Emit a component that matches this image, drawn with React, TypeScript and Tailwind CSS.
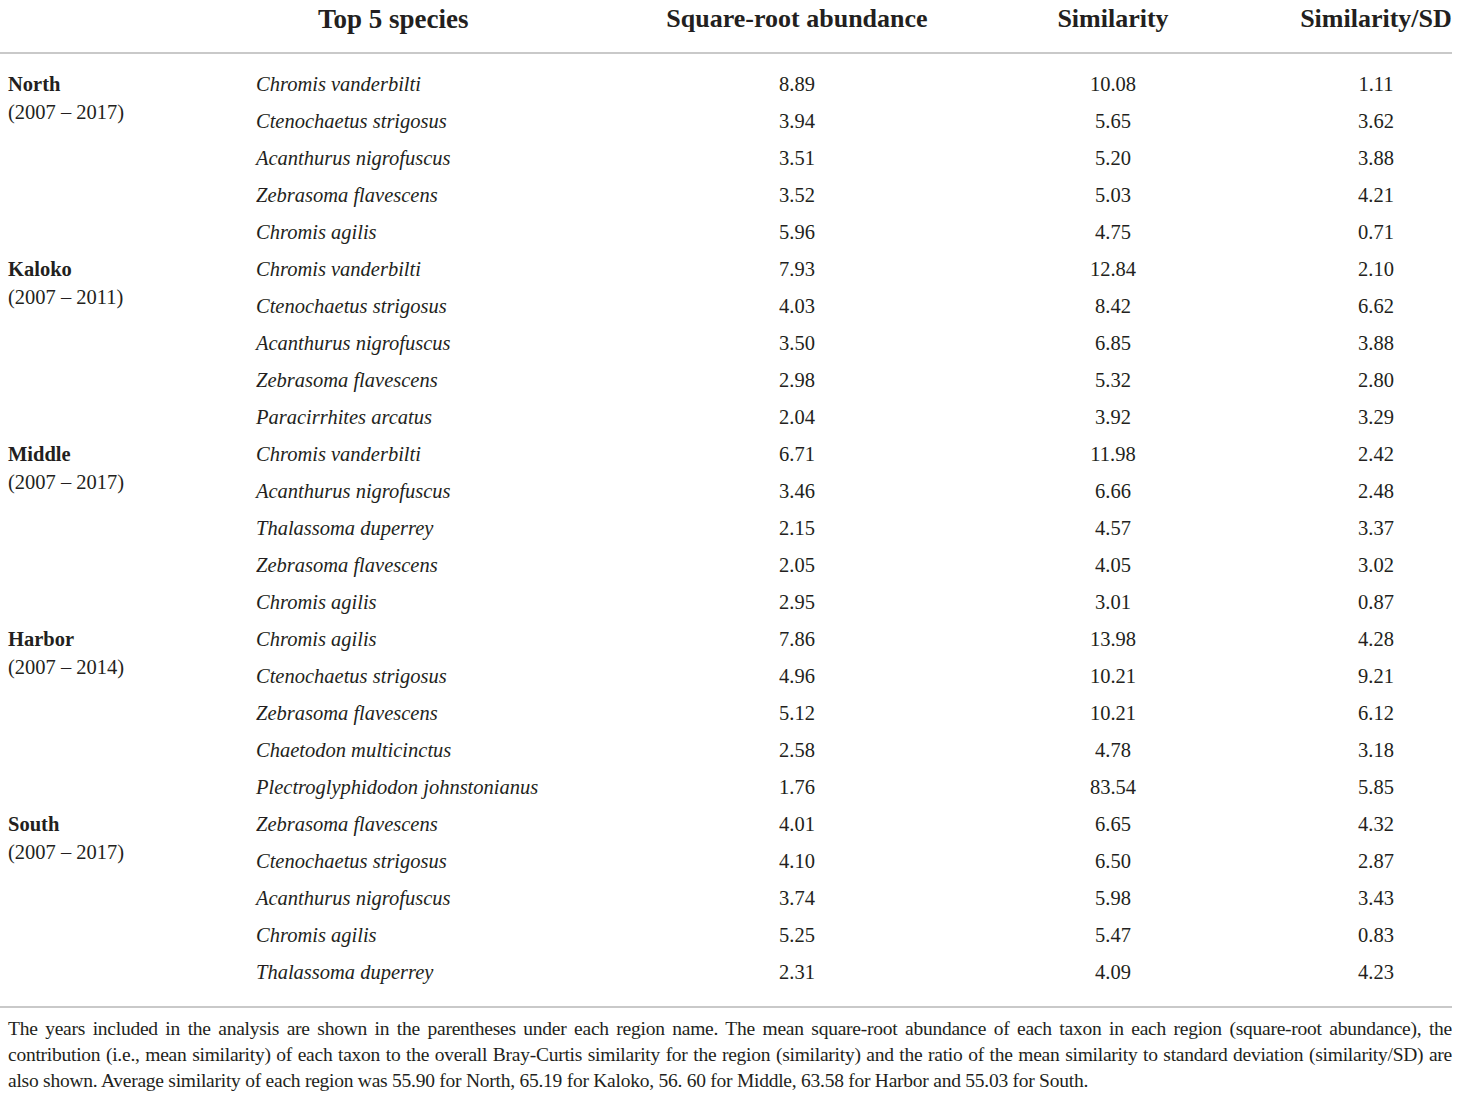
import React from 'react';

type Row = { species: string; abund: string; sim: string; sd: string };
type Region = { name: string; years: string; rows: Row[] };

const regions: Region[] = [
  {
    name: 'North',
    years: '(2007 – 2017)',
    rows: [
      { species: 'Chromis vanderbilti', abund: '8.89', sim: '10.08', sd: '1.11' },
      { species: 'Ctenochaetus strigosus', abund: '3.94', sim: '5.65', sd: '3.62' },
      { species: 'Acanthurus nigrofuscus', abund: '3.51', sim: '5.20', sd: '3.88' },
      { species: 'Zebrasoma flavescens', abund: '3.52', sim: '5.03', sd: '4.21' },
      { species: 'Chromis agilis', abund: '5.96', sim: '4.75', sd: '0.71' },
    ],
  },
  {
    name: 'Kaloko',
    years: '(2007 – 2011)',
    rows: [
      { species: 'Chromis vanderbilti', abund: '7.93', sim: '12.84', sd: '2.10' },
      { species: 'Ctenochaetus strigosus', abund: '4.03', sim: '8.42', sd: '6.62' },
      { species: 'Acanthurus nigrofuscus', abund: '3.50', sim: '6.85', sd: '3.88' },
      { species: 'Zebrasoma flavescens', abund: '2.98', sim: '5.32', sd: '2.80' },
      { species: 'Paracirrhites arcatus', abund: '2.04', sim: '3.92', sd: '3.29' },
    ],
  },
  {
    name: 'Middle',
    years: '(2007 – 2017)',
    rows: [
      { species: 'Chromis vanderbilti', abund: '6.71', sim: '11.98', sd: '2.42' },
      { species: 'Acanthurus nigrofuscus', abund: '3.46', sim: '6.66', sd: '2.48' },
      { species: 'Thalassoma duperrey', abund: '2.15', sim: '4.57', sd: '3.37' },
      { species: 'Zebrasoma flavescens', abund: '2.05', sim: '4.05', sd: '3.02' },
      { species: 'Chromis agilis', abund: '2.95', sim: '3.01', sd: '0.87' },
    ],
  },
  {
    name: 'Harbor',
    years: '(2007 – 2014)',
    rows: [
      { species: 'Chromis agilis', abund: '7.86', sim: '13.98', sd: '4.28' },
      { species: 'Ctenochaetus strigosus', abund: '4.96', sim: '10.21', sd: '9.21' },
      { species: 'Zebrasoma flavescens', abund: '5.12', sim: '10.21', sd: '6.12' },
      { species: 'Chaetodon multicinctus', abund: '2.58', sim: '4.78', sd: '3.18' },
      { species: 'Plectroglyphidodon johnstonianus', abund: '1.76', sim: '83.54', sd: '5.85' },
    ],
  },
  {
    name: 'South',
    years: '(2007 – 2017)',
    rows: [
      { species: 'Zebrasoma flavescens', abund: '4.01', sim: '6.65', sd: '4.32' },
      { species: 'Ctenochaetus strigosus', abund: '4.10', sim: '6.50', sd: '2.87' },
      { species: 'Acanthurus nigrofuscus', abund: '3.74', sim: '5.98', sd: '3.43' },
      { species: 'Chromis agilis', abund: '5.25', sim: '5.47', sd: '0.83' },
      { species: 'Thalassoma duperrey', abund: '2.31', sim: '4.09', sd: '4.23' },
    ],
  },
];

const cols = 'grid grid-cols-[256px_384px_314px_318px_188px]';

export default function App() {
  return (
    <div className="w-[1460px] min-h-[1098px] bg-white text-[#231f20] font-['Liberation_Serif',serif]">
      {/* Header */}
      <div className={`${cols} h-[52px] items-start pt-[2px] text-[26px] leading-[34px] font-bold`}>
        <div />
        <div className="pl-[62px] text-[27px]">Top 5 species</div>
        <div className="text-center">Square-root abundance</div>
        <div className="text-center">Similarity</div>
        <div className="text-center pl-[20px]">Similarity/SD</div>
      </div>
      <div className="h-[2px] w-[1452px] bg-[#c9c9c9]" />

      {/* Body */}
      <div className="pt-[12px] pb-[15px] text-[20.5px]">
        {regions.map((r) => (
          <div key={r.name} className={`${cols}`}>
            <div className="pl-[8px] pt-[4px] leading-[28px]">
              <div className="font-bold">{r.name}</div>
              <div>{r.years}</div>
            </div>
            <div className="col-span-4">
              {r.rows.map((row, i) => (
                <div key={i} className="grid grid-cols-[384px_314px_318px_188px] h-[37px] items-center">
                  <div className="italic">{row.species}</div>
                  <div className="text-center">{row.abund}</div>
                  <div className="text-center">{row.sim}</div>
                  <div className="text-center pl-[20px]">{row.sd}</div>
                </div>
              ))}
            </div>
          </div>
        ))}
      </div>
      <div className="h-[2px] w-[1452px] bg-[#c9c9c9]" />

      {/* Footnote */}
      <p className="w-[1452px] pl-[8px] pt-[8px] text-[19.5px] leading-[26px] tracking-[-0.25px] text-justify">
        The years included in the analysis are shown in the parentheses under each region name. The mean square-root abundance of each taxon in each region (square-root abundance), the contribution (i.e., mean similarity) of each taxon to the overall Bray-Curtis similarity for the region (similarity) and the ratio of the mean similarity to standard deviation (similarity/SD) are also shown. Average similarity of each region was 55.90 for North, 65.19 for Kaloko, 56. 60 for Middle, 63.58 for Harbor and 55.03 for South.
      </p>
    </div>
  );
}
